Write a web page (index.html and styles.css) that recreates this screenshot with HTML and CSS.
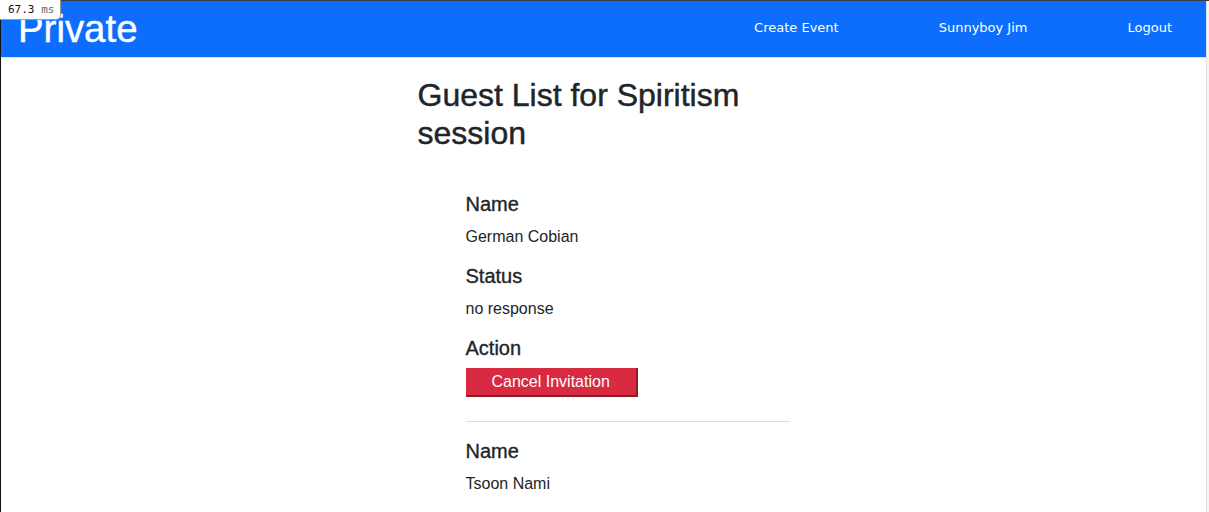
FILE: index.html
```html
<!DOCTYPE html>
<html lang="en">
<head>
<meta charset="utf-8">
<title>Guest List</title>
<link rel="stylesheet" href="styles.css">
</head>
<body>
<div class="frame">
  <div class="page">
    <nav class="navbar">
      <a class="brand" href="#">Private</a>
      <div class="links">
        <a href="#">Create Event</a>
        <a href="#">Sunnyboy Jim</a>
        <a href="#">Logout</a>
      </div>
    </nav>
    <main class="container">
      <h2 class="title">Guest List for Spiritism session</h2>
      <ul class="guests">
        <li class="guest">
          <h5>Name</h5>
          <p>German Cobian</p>
          <h5>Status</h5>
          <p>no response</p>
          <h5>Action</h5>
          <div class="action"><button class="cancel" type="button">Cancel Invitation</button></div>
          <hr>
        </li>
        <li class="guest">
          <h5>Name</h5>
          <p>Tsoon Nami</p>
          <h5>Status</h5>
          <p>no response</p>
        </li>
      </ul>
    </main>
  </div>
  <div class="scrollbar"></div>
</div>
<div class="timer"><span class="num">67.3</span> <span class="unit">ms</span></div>
</body>
</html>
```
FILE: styles.css
```css
html, body {
  margin: 0;
  padding: 0;
  height: 100%;
  overflow: hidden;
}
body {
  font-family: "Liberation Sans", Arial, sans-serif;
  color: #212529;
  background: #fff;
  font-size: 16px;
}
.frame {
  display: flex;
  height: 100%;
  border-top: 1px solid #3a3a3a;
  border-left: 1px solid #111;
  box-sizing: border-box;
}
.page {
  flex: 1;
  min-width: 0;
}
.scrollbar {
  width: 2px;
  border-left: 1px solid #e2e2e2;
  background: #f4f4f4;
}
.navbar {
  display: flex;
  justify-content: space-between;
  background: #0d6efd;
  height: 56px;
  border-bottom: 1px solid #dcdfe3;
}
.brand {
  color: #fff;
  text-decoration: none;
  font-size: 38.4px;
  line-height: 56px;
  padding: 0 0 2px 17px;
  box-sizing: border-box;
  height: 56px;
  display: block;
  -webkit-text-stroke: 0.4px #fff;
}
.links {
  display: flex;
  gap: 100px;
  padding-right: 34px;
}
.links a {
  font-family: "DejaVu Sans", Verdana, sans-serif;
  font-size: 13px;
  color: #fff;
  text-decoration: none;
  line-height: 54px;
}
.container {
  width: 372px;
  margin: 0 auto;
  padding-top: 18px;
}
.title {
  font-size: 32px;
  font-weight: normal;
  line-height: 38.4px;
  margin: 0;
  -webkit-text-stroke: 0.45px #212529;
}
.guests {
  list-style: none;
  margin: 39px 0 0;
  padding: 0 0 0 48px;
}
.guest h5 {
  font-size: 20px;
  font-weight: normal;
  line-height: 24px;
  margin: 0 0 8px;
  -webkit-text-stroke: 0.35px #212529;
}
.guest p {
  margin: 0 0 16px;
  line-height: 24px;
  position: relative;
  top: 1px;
}
.action {
  margin: 1px 0 24px;
}
.cancel {
  display: block;
  font-family: "Liberation Sans", Arial, sans-serif;
  font-size: 16px;
  line-height: 24px;
  color: #fff;
  background: #d82a41;
  border: 0;
  border-right: 2px solid #8e1b2a;
  border-bottom: 2px solid #8e1b2a;
  padding: 2px 26px 1px 26px;
  cursor: pointer;
}
hr {
  border: 0;
  border-top: 1px solid #dadde0;
  margin: 0 0 17px;
}
.timer {
  position: absolute;
  top: 0;
  left: 0;
  width: 61px;
  height: 20px;
  box-sizing: border-box;
  padding-left: 8px;
  background: #fff;
  border-right: 1px solid #999;
  border-bottom: 1px solid #999;
  border-bottom-right-radius: 5px;
  font-family: "DejaVu Sans Mono", "Liberation Mono", monospace;
  font-size: 11px;
  line-height: 19px;
}
.timer .num { color: #111; }
.timer .unit { color: #666; }
```
